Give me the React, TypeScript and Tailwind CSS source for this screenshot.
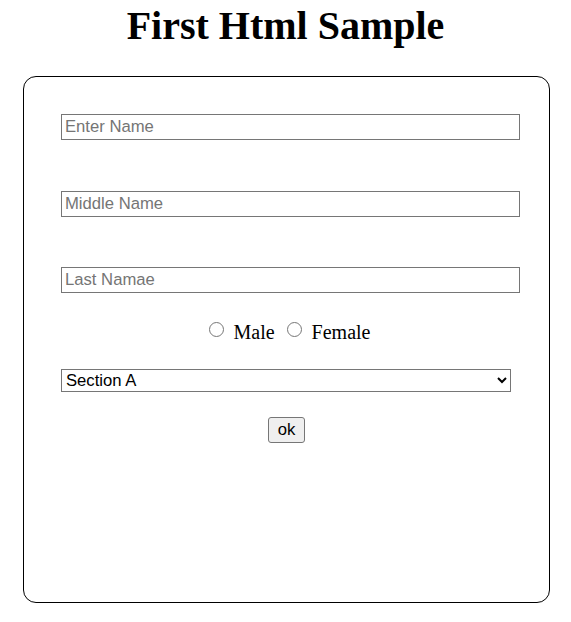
import { useState } from 'react';

export default function App() {
    const [gender, setGender] = useState('');
    const [section, setSection] = useState('A');

    const inputClass =
        "block w-[459px] h-[26px] px-[3px] border border-[#767676] bg-white text-[16.67px] text-black placeholder:text-[#757575] font-['Liberation_Sans',Arial,sans-serif] outline-none";

    return (
        <div className="min-h-[622px] bg-white font-['Liberation_Serif','Times_New_Roman',serif] text-black">
            {/* Заголовок */}
            <h1 className="pt-[3px] text-center text-[40px] leading-[46px] font-bold">First Html Sample</h1>

            {/* Форма */}
            <form
                className="mt-[27px] ml-[23px] w-[527px] h-[527px] border border-black rounded-[13px] px-[37px] pt-[37px]"
                onSubmit={(e) => e.preventDefault()}
            >
                <input type="text" placeholder="Enter Name" className={inputClass} />
                <input type="text" placeholder="Middle Name" className={`${inputClass} mt-[51px]`} />
                <input type="text" placeholder="Last Namae" className={`${inputClass} mt-[50px]`} />

                <div className="mt-[28px] flex items-start justify-center text-[20px] leading-[23px] pl-[6px]">
                    <input
                        type="radio"
                        name="gender"
                        checked={gender === 'male'}
                        onChange={() => setGender('male')}
                        className="w-[15px] h-[15px] mt-[1px] m-0"
                    />
                    <span className="ml-[10px]">Male</span>
                    <input
                        type="radio"
                        name="gender"
                        checked={gender === 'female'}
                        onChange={() => setGender('female')}
                        className="w-[15px] h-[15px] mt-[1px] ml-[12px]"
                    />
                    <span className="ml-[10px]">Female</span>
                </div>

                <select
                    value={section}
                    onChange={(e) => setSection(e.target.value)}
                    className="block mt-[25px] w-[450px] h-[23px] border border-[#767676] bg-white rounded-none text-[16.67px] font-['Liberation_Sans',Arial,sans-serif] text-black"
                >
                    <option value="A">Section A</option>
                    <option value="B">Section B</option>
                    <option value="C">Section C</option>
                </select>

                <div className="mt-[25px] flex justify-center">
                    <button
                        type="submit"
                        className="h-[26px] px-[9px] border border-[#767676] rounded-[3px] bg-[#efefef] text-[16.67px] leading-[20px] font-['Liberation_Sans',Arial,sans-serif] text-black"
                    >
                        ok
                    </button>
                </div>
            </form>
        </div>
    );
}
